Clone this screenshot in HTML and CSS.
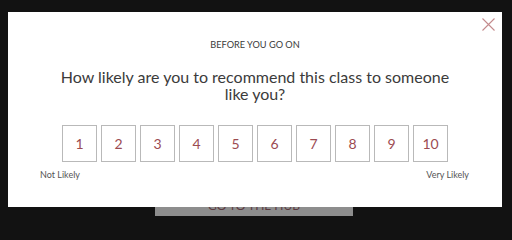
FILE: index.html
```html
<!DOCTYPE html>
<html>
<head>
<meta charset="utf-8">
<link rel="stylesheet" href="styles.css">
</head>
<body>
<div class="page">
  <div class="hub-bar">
    <span class="hub-btn">GO TO THE HUB</span>
  </div>
</div>
<div class="modal">
  <button class="close" aria-label="Close">
    <svg width="13" height="13" viewBox="0 0 13 13"><path d="M0.5 0.5 L12.5 12.5 M12.5 0.5 L0.5 12.5" stroke="#c48b8d" stroke-width="1.1" fill="none"/></svg>
  </button>
  <div class="eyebrow">BEFORE YOU GO ON</div>
  <h1 class="question">How likely are you to recommend this class to someone like you?</h1>
  <div class="scale">
    <div class="box">1</div>
    <div class="box">2</div>
    <div class="box">3</div>
    <div class="box">4</div>
    <div class="box">5</div>
    <div class="box">6</div>
    <div class="box">7</div>
    <div class="box">8</div>
    <div class="box">9</div>
    <div class="box">10</div>
  </div>
  <div class="labels">
    <span>Not Likely</span>
    <span>Very Likely</span>
  </div>
</div>
</body>
</html>
```
FILE: styles.css
```css
html, body {
  margin: 0;
  padding: 0;
}
body {
  width: 512px;
  height: 216px;
  background: #121212;
  font-family: Lato, "Noto Sans", sans-serif;
  position: relative;
  overflow: hidden;
}
.page {
  height: 216px;
  display: flex;
  flex-direction: column;
  justify-content: flex-end;
}
.hub-bar {
  display: flex;
  padding-left: 155px;
}
.hub-btn {
  width: 198px;
  height: 16px;
  background: #8d8d8d;
  color: #5c3b41;
  font-size: 12px;
  text-align: center;
  line-height: 12px;
  box-sizing: border-box;
}
.modal {
  position: absolute;
  left: 8px;
  top: 12px;
  width: 494px;
  height: 195px;
  background: #fff;
  box-sizing: border-box;
  padding-top: 27px;
  display: flex;
  flex-direction: column;
  align-items: center;
}
.close {
  position: absolute;
  right: 7px;
  top: 6px;
  background: none;
  border: 0;
  padding: 0;
  width: 13px;
  height: 13px;
  display: flex;
}
.eyebrow {
  font-size: 9.2px;
  color: #3a3a3a;
  line-height: 12px;
}
.question {
  margin: 17px 0 0;
  width: 410px;
  text-align: center;
  font-weight: normal;
  font-size: 16px;
  line-height: 17px;
  color: #3b3b3b;
}
.scale {
  margin-top: 23px;
  display: flex;
  gap: 4px;
}
.box {
  width: 35px;
  height: 37px;
  box-sizing: border-box;
  border: 1px solid #b9b9b9;
  display: flex;
  align-items: center;
  justify-content: center;
  color: #9c4b52;
  font-size: 14px;
}
.labels {
  align-self: stretch;
  display: flex;
  justify-content: space-between;
  padding: 0 33px 0 32px;
  margin-top: 7px;
  font-size: 9px;
  color: #555;
  line-height: 12px;
}
```
